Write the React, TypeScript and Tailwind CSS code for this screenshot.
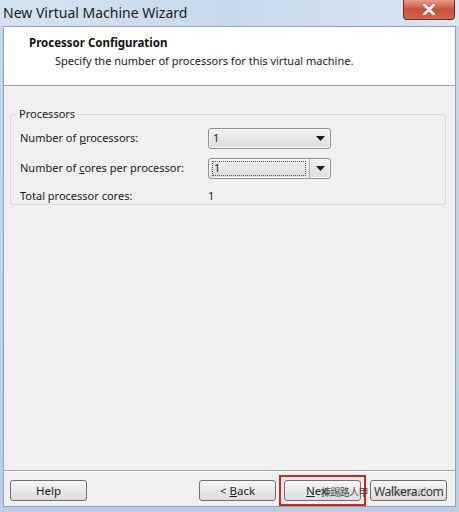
import React from "react";

const font = { fontFamily: '"Noto Sans", "Open Sans", "Liberation Sans", sans-serif' };

function Combo({ focused = false }: { focused?: boolean }) {
  return (
    <div className="flex h-[21px] w-[123px] items-center rounded-[3px] border border-[#8e8f8f] bg-gradient-to-b from-[#f2f2f2] to-[#dcdcdc] shadow-[inset_0_0_0_1px_#fafafa]">
      <div className="flex h-full flex-1 items-center px-[3px]">
        <span
          className={`flex h-[15px] flex-1 items-center pl-[1px] text-[11px] text-[#222] ${
            focused ? "border border-dotted border-[#555]" : ""
          }`}
        >
          1
        </span>
      </div>
      {focused && <div className="h-full w-px bg-[#b0b0b0]" />}
      <div className="flex h-full w-[20px] items-center justify-center">
        <svg width="9" height="5" viewBox="0 0 9 5">
          <path d="M0 0 H9 L4.5 5 Z" fill="#1a1a1a" />
        </svg>
      </div>
    </div>
  );
}

function Btn({ children, className = "" }: { children: React.ReactNode; className?: string }) {
  return (
    <div
      className={`flex h-[21px] w-[77px] items-center justify-center rounded-[3px] border border-[#707070] bg-gradient-to-b from-[#f6f6f6] to-[#dddddd] text-[11.5px] text-[#1e1e1e] ${className}`}
    >
      {children}
    </div>
  );
}

export default function App() {
  return (
    <div className="relative h-[512px] w-[459px] overflow-hidden bg-gradient-to-b from-[#c4d7ec] to-[#b9cde4]" style={font}>
      {/* title bar */}
      <div className="relative flex h-[26px] items-center bg-gradient-to-r from-[#d5e3f1] via-[#c7d9ec] to-[#d9e6f3] pl-[3px]">
        <span className="text-[14px] leading-none text-[#1b1b1b]">New Virtual Machine Wizard</span>
        <div className="absolute right-[4px] top-0 flex h-[20px] w-[52px] items-center justify-center rounded-b-[4px] border border-t-0 border-[#7b2a20] bg-gradient-to-b from-[#e69a8a] via-[#c9513a] to-[#d0664e]">
          <svg width="12" height="11" viewBox="0 0 12 11">
            <path d="M1.5 1 L10.5 10 M10.5 1 L1.5 10" stroke="#fff" strokeWidth="2.6" strokeLinecap="square" />
          </svg>
        </div>
      </div>

      {/* client */}
      <div className="mx-[3px] flex h-[481px] flex-col border border-[#8fa3b8] bg-[#f0f0f0]">
        <div className="h-[59px] border-b border-[#a0a0a0] bg-white pl-[25px] pt-[8px]">
          <div className="text-[11.5px] font-bold leading-[16px] text-[#111]">Processor Configuration</div>
          <div className="pl-[26px] pt-[2px] text-[11px] leading-[16px] text-[#1a1a1a]">
            Specify the number of processors for this virtual machine.
          </div>
        </div>

        <div className="flex-1 px-[6px] pt-[28px]">
          <div className="relative h-[91px] w-[436px] rounded-[3px] border border-[#d9d9d9] pl-[9px] pt-[8px]">
            <span className="absolute left-[5px] top-[-9px] bg-[#f0f0f0] px-[3px] text-[11px] text-[#1a1a1a]">Processors</span>
            <div className="flex h-[30px] items-center">
              <span className="w-[188px] text-[11px] text-[#1a1a1a]">
                Number of <u>p</u>rocessors:
              </span>
              <Combo />
            </div>
            <div className="flex h-[30px] items-center">
              <span className="w-[188px] text-[11px] text-[#1a1a1a]">
                Number of <u>c</u>ores per processor:
              </span>
              <Combo focused />
            </div>
            <div className="flex h-[26px] items-center">
              <span className="w-[188px] text-[11px] text-[#1a1a1a]">Total processor cores:</span>
              <span className="text-[11px] text-[#1a1a1a]">1</span>
            </div>
          </div>
        </div>

        <div className="h-[36px] border-t border-[#a0a0a0] bg-[#f0f0f0] shadow-[inset_0_1px_0_#fff]">
          <div className="flex items-center pl-[6px] pr-[8px] pt-[9px]">
            <Btn>Help</Btn>
            <div className="flex-1" />
            <Btn>
              &lt; <u className="ml-[3px]">B</u>ack
            </Btn>
            <div className="relative ml-[8px] outline outline-2 outline-offset-[3px] outline-[#e02020]">
              <Btn className="border-[#3c7fb1] from-[#eaf6fd] to-[#bee6fd] justify-start pl-[21px]">
                <u>N</u>ex
              </Btn>
            </div>
            <Btn className="ml-[9px] text-[#a8a8a8]">Cancel</Btn>
          </div>
        </div>
      </div>

      {/* watermark overlay */}
      <span
        className="absolute left-[321px] top-[484px] text-[10px] tracking-[-0.6px] text-[#3a3a3a] opacity-90"
        style={{ fontFamily: '"Noto Sans CJK TC", "Noto Sans", sans-serif' }}
      >
        揀踢路人甲
      </span>
      <span className="absolute left-[374px] top-[483px] text-[12px] tracking-[-0.3px] text-[#333]">
        Walkera.com
      </span>
    </div>
  );
}
